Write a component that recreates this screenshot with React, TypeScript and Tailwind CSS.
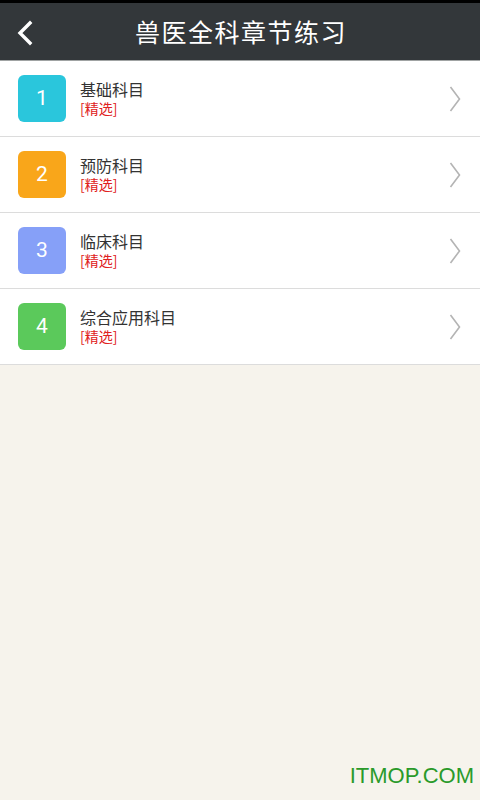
import React from "react";

const items = [
  { n: "1", name: "基础科目", color: "bg-[#2ac6dc]" },
  { n: "2", name: "预防科目", color: "bg-[#f9a61a]" },
  { n: "3", name: "临床科目", color: "bg-[#86a0f8]" },
  { n: "4", name: "综合应用科目", color: "bg-[#5bc95b]" },
];

const font = { fontFamily: '"Noto Sans CJK SC", "Noto Sans", Roboto, sans-serif' };

export default function App() {
  return (
    <div className="w-[480px] h-[800px] bg-[#f6f3ec] flex flex-col relative overflow-hidden" style={font}>
      <div className="h-[3px] bg-black" />
      <div className="h-[57px] bg-[#33373a] flex items-center justify-center relative">
        <svg className="absolute left-[14px] top-[16px]" width="22" height="28" viewBox="0 0 22 28">
          <path d="M16 4 L6 14 L16 24" stroke="white" strokeWidth="3.4" fill="none" strokeLinecap="square" />
        </svg>
        <span className="text-white text-[25px] tracking-[1.5px] leading-none ml-[2px]">兽医全科章节练习</span>
      </div>
      <div className="h-px bg-[#a0a3a3]" />
      {items.map((it) => (
        <div key={it.n} className="bg-white border-b border-[#dcdcdc] h-[76px] flex items-center">
          <div className={`ml-[18px] w-[48px] h-[47px] rounded-[6px] ${it.color} flex items-center justify-center text-white text-[21px]`} style={{ fontFamily: "Roboto, sans-serif" }}>
            {it.n}
          </div>
          <div className="ml-[14px] flex flex-col flex-1 -mt-[2px]">
            <span className="text-[#333] text-[16px] leading-[20px]">{it.name}</span>
            <span className="text-[#e02020] text-[14px] leading-[18px]">[精选]</span>
          </div>
          <svg className="mr-[19px]" width="12" height="26" viewBox="0 0 12 26">
            <path d="M1.5 1 L10.5 13 L1.5 25" stroke="#b4b4b4" strokeWidth="1.6" fill="none" />
          </svg>
        </div>
      ))}
      <div className="absolute right-[6px] bottom-[13px] text-[#2a9a2a] text-[22px] font-normal leading-none" style={{ fontFamily: '"Liberation Sans", Arial, sans-serif' }}>
        ITMOP.COM
      </div>
    </div>
  );
}
